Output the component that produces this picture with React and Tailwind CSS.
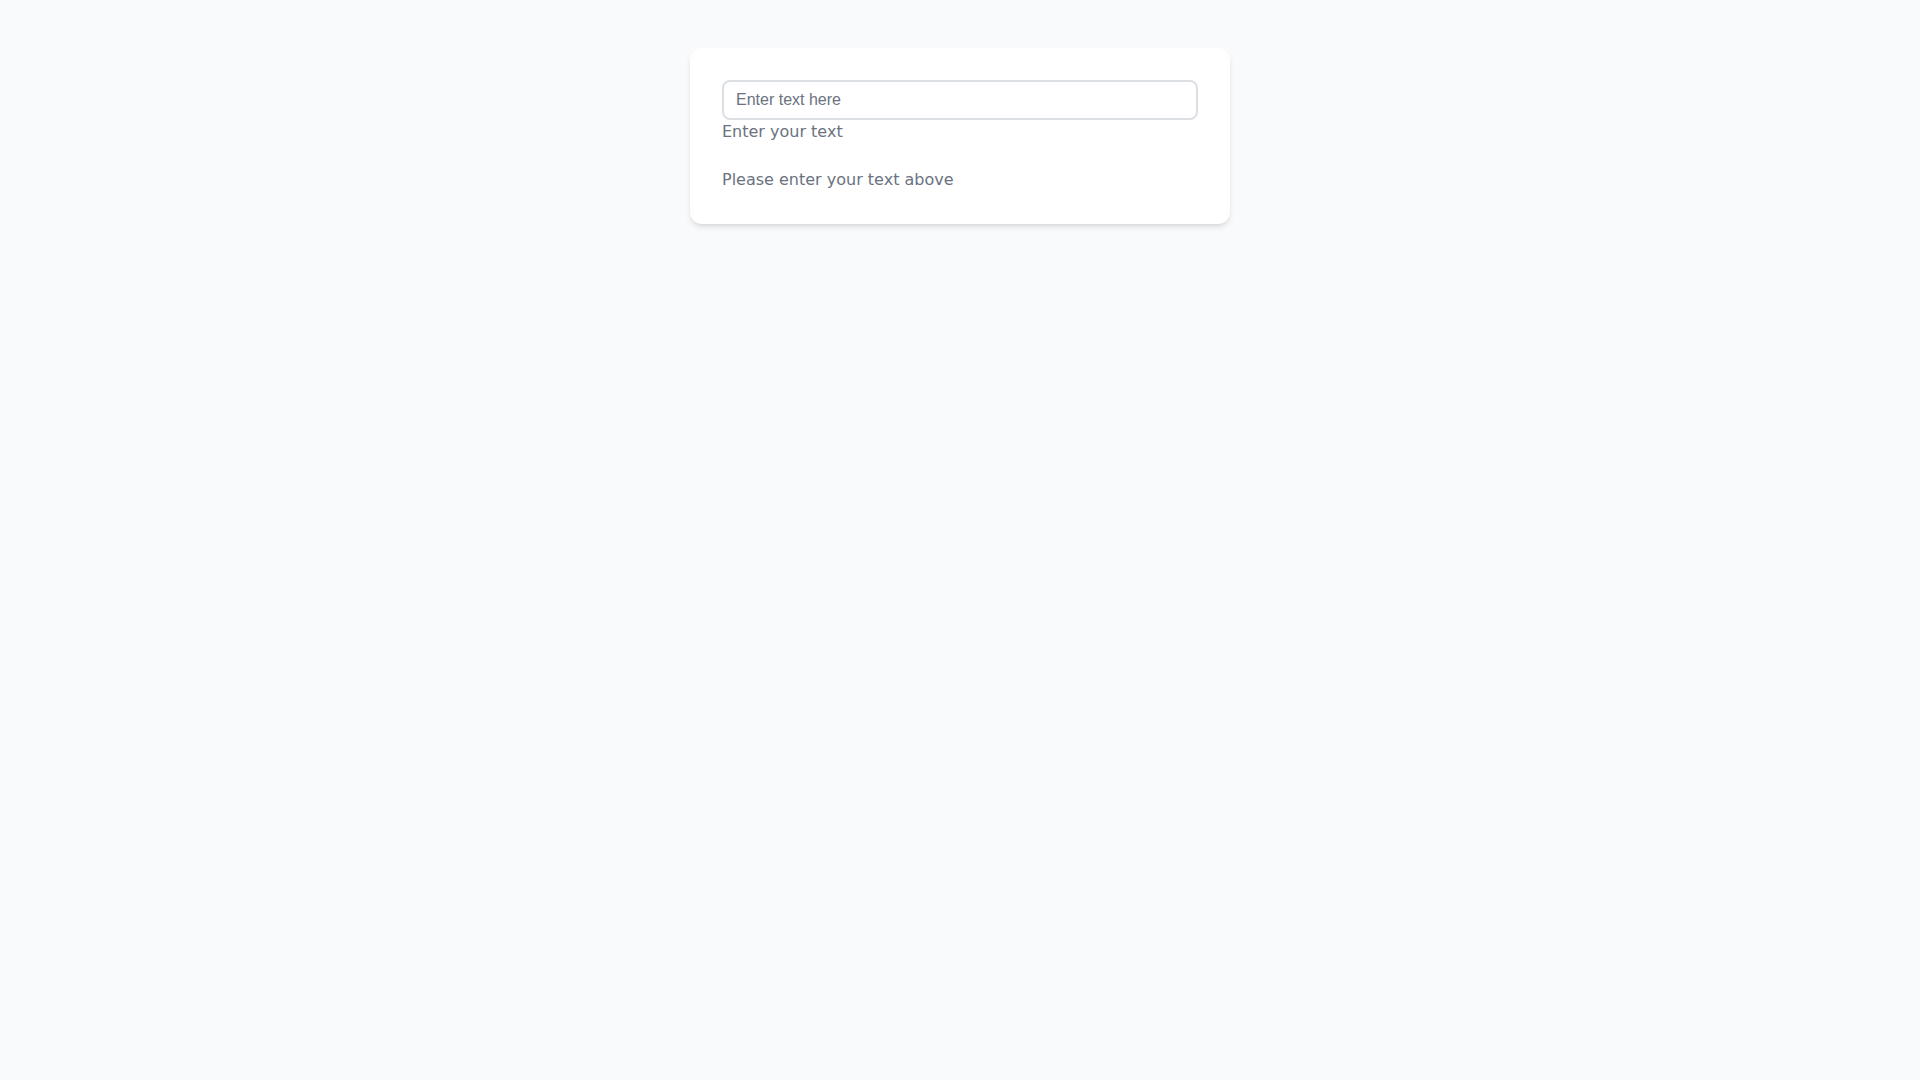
import React, { useState } from 'react';

function App() {
  const [text, setText] = useState('');

  return (
    <div className="min-h-screen bg-gray-50 font-['DejaVu_Sans',sans-serif]">
      <div className="flex justify-center pt-12">
        <div className="w-[540px] bg-white rounded-xl shadow-md p-8">
          <input
            type="text"
            value={text}
            onChange={e => setText(e.target.value)}
            placeholder="Enter text here"
            className="block w-full px-3 py-1.5 border-2 border-[#dcdfe4] rounded-lg text-base text-gray-800 placeholder-[#6b7280] font-['Liberation_Sans',Arial,sans-serif] focus:outline-none"
          />
          <label className="block text-base text-[#6b7280]">Enter your text</label>
          <p className="mt-6 text-base text-[#6b7280]">
            {text ? text : 'Please enter your text above'}
          </p>
        </div>
      </div>
    </div>
  );
}

export default App;
